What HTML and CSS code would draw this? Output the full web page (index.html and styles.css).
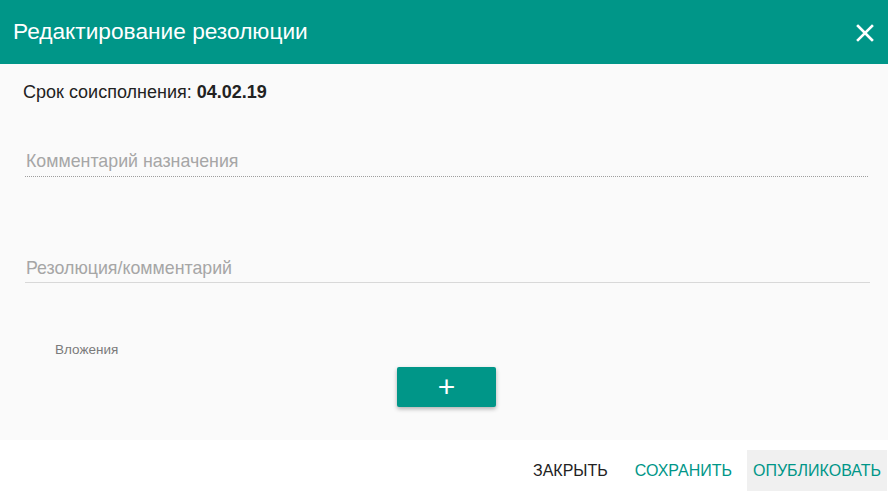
FILE: index.html
```html
<!DOCTYPE html>
<html lang="ru">
<head>
<meta charset="utf-8">
<link rel="stylesheet" href="styles.css">
</head>
<body>
<div class="dialog">
  <header class="head">
    <h1 class="title">Редактирование резолюции</h1>
    <button class="close" aria-label="Закрыть">
      <svg width="18" height="18" viewBox="0 0 18 18"><path d="M2 2L16 16M16 2L2 16" stroke="#fff" stroke-width="2.6" stroke-linecap="square"/></svg>
    </button>
  </header>
  <main class="body">
    <div class="deadline">Срок соисполнения: <b>04.02.19</b></div>
    <div class="field dotted"><span class="ph">Комментарий назначения</span></div>
    <div class="field solid"><span class="ph">Резолюция/комментарий</span></div>
    <div class="attach">Вложения</div>
    <div class="addrow"><button class="add">+</button></div>
  </main>
  <footer class="foot">
    <button class="btn dark">Закрыть</button>
    <button class="btn">Сохранить</button>
    <button class="btn active">Опубликовать</button>
  </footer>
</div>
</body>
</html>
```
FILE: styles.css
```css
* { box-sizing: border-box; }
html, body { margin: 0; padding: 0; }
body { font-family: "Liberation Sans", Arial, sans-serif; background: #fff; width: 888px; height: 494px; overflow: hidden; }
.dialog { display: flex; flex-direction: column; height: 494px; }
.head { height: 64px; background: #009688; display: flex; align-items: center; justify-content: space-between; padding: 0 14px 0 13px; }
.title { margin: 0; color: #fff; font-weight: 400; font-size: 22.7px; padding-bottom: 1px; }
.close { background: none; border: 0; padding: 0; display: flex; margin-top: 2px; }
.body { background: #fafafa; height: 376px; padding: 18px 18px 0 23px; display: flex; flex-direction: column; }
.deadline { font-size: 18px; color: #222; line-height: 20px; }
.deadline b { font-weight: 700; }
.field { margin-left: 2px; display: flex; }
.ph { font-size: 17.8px; line-height: 20px; color: #a6a6a6; padding-left: 1px; }
.dotted { margin-top: 49px; padding: 0 0 5px; border-bottom: 1px dotted #9e9e9e; margin-right: 2px; }
.solid { margin-top: 81px; padding: 0 0 4px; border-bottom: 1px solid #d8d8d8; }
.attach { margin-top: 59px; margin-left: 32px; font-size: 13.5px; color: #7a7a7a; line-height: 16px; }
.addrow { display: flex; justify-content: center; margin-top: 9px; }
.add { width: 99px; height: 40px; background: #009688; color: #fff; border: 0; border-radius: 2px; font-size: 30px; font-weight: 400; line-height: 40px; padding: 0; box-shadow: 0 2px 4px rgba(0,0,0,0.3); font-family: "Liberation Sans", Arial, sans-serif; }
.foot { flex: 1; display: flex; justify-content: flex-end; align-items: center; padding-top: 7px; }
.btn { font-family: "Liberation Sans", Arial, sans-serif; font-size: 16px; text-transform: uppercase; color: #009688; background: none; border: 0; height: 41px; padding: 0 7px; margin-left: 13px; }
.btn.dark { color: #222; }
.btn.active { background: #f0f0f0; margin-left: 8px; padding: 0 6px; margin-right: 1px; }
```
